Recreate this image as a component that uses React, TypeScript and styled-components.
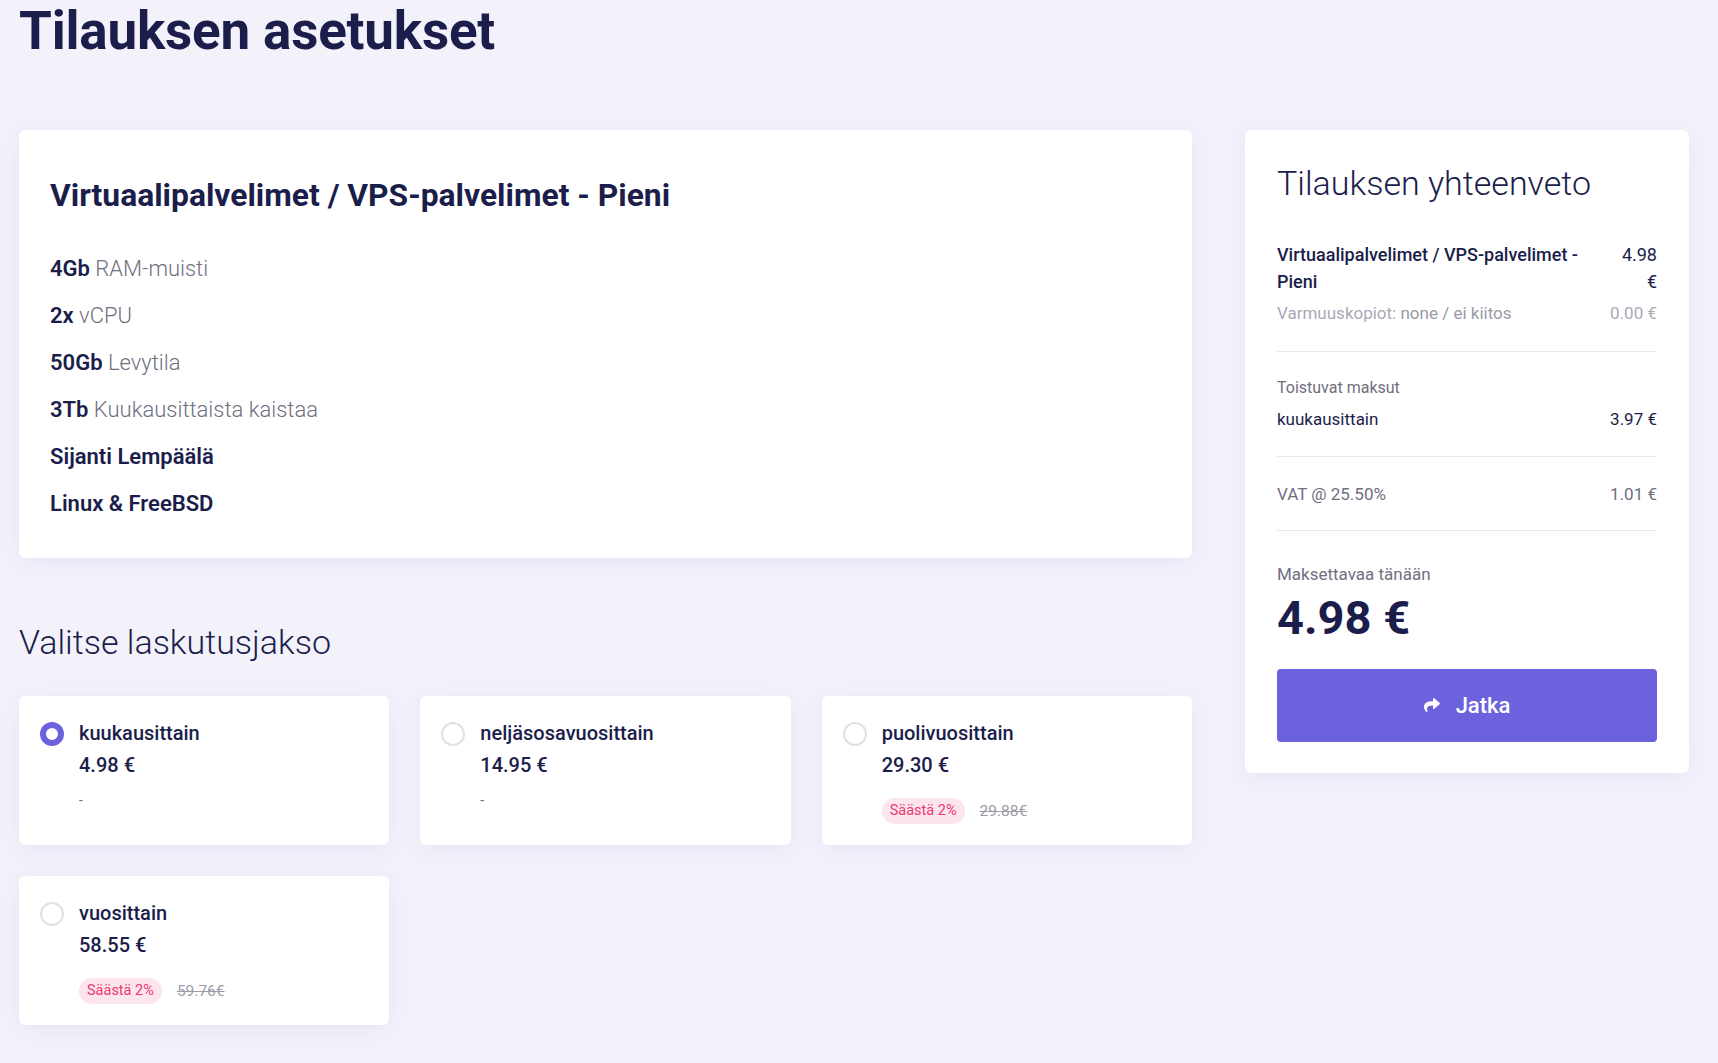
import React, { useState } from "react"
import styled, { createGlobalStyle } from "styled-components"
import { FaShare } from "react-icons/fa"

const Colors = {
  bg: "#f3f2fb",
  navy: "#1b1e4b",
  gray: "#6f6f80",
  light: "#a9a9b6",
  line: "#e9e8ef",
  purple: "#6c62de",
  pink: "#ec3a72",
  pinkBg: "#fde5ed",
}

const GlobalStyle = createGlobalStyle`
  body {
    margin: 0;
    background: ${Colors.bg};
    font-family: Roboto, "Liberation Sans", sans-serif;
    color: ${Colors.navy};
  }
  * { box-sizing: border-box; }
`

type Cycle = {
  id: string
  name: string
  price: string
  saving?: string
  original?: string
}

const cycles: Cycle[] = [
  { id: "m", name: "kuukausittain", price: "4.98 €" },
  { id: "q", name: "neljäsosavuosittain", price: "14.95 €" },
  { id: "h", name: "puolivuosittain", price: "29.30 €", saving: "Säästä 2%", original: "29.88€" },
  { id: "y", name: "vuosittain", price: "58.55 €", saving: "Säästä 2%", original: "59.76€" },
]

const specs = [
  { strong: "4Gb", rest: "RAM-muisti" },
  { strong: "2x", rest: "vCPU" },
  { strong: "50Gb", rest: "Levytila" },
  { strong: "3Tb", rest: "Kuukausittaista kaistaa" },
  { strong: "Sijanti Lempäälä", rest: "" },
  { strong: "Linux & FreeBSD", rest: "" },
]

export default function App() {
  const [selected, setSelected] = useState("m")

  return (
    <S.Page>
      <GlobalStyle />
      <S.PageTitle>Tilauksen asetukset</S.PageTitle>
      <S.Layout>
        <S.Main>
          <S.ProductCard>
            <S.ProductTitle>Virtuaalipalvelimet / VPS-palvelimet - Pieni</S.ProductTitle>
            <S.SpecList>
              {specs.map((s) => (
                <S.Spec key={s.strong}>
                  <strong>{s.strong}</strong>
                  {s.rest && <span> {s.rest}</span>}
                </S.Spec>
              ))}
            </S.SpecList>
          </S.ProductCard>

          <S.SectionTitle>Valitse laskutusjakso</S.SectionTitle>
          <S.CycleGrid>
            {cycles.map((c) => (
              <S.CycleCard key={c.id} onClick={() => setSelected(c.id)}>
                <S.Radio checked={selected === c.id} />
                <S.CycleBody>
                  <S.CycleName>{c.name}</S.CycleName>
                  <S.CyclePrice>{c.price}</S.CyclePrice>
                  {c.saving ? (
                    <S.SavingRow>
                      <S.Badge>{c.saving}</S.Badge>
                      <S.OldPrice>{c.original}</S.OldPrice>
                    </S.SavingRow>
                  ) : (
                    <S.NoSaving>-</S.NoSaving>
                  )}
                </S.CycleBody>
              </S.CycleCard>
            ))}
          </S.CycleGrid>
        </S.Main>

        <S.Summary>
          <S.SummaryTitle>Tilauksen yhteenveto</S.SummaryTitle>
          <S.ItemRow>
            <S.ItemName>Virtuaalipalvelimet / VPS-palvelimet - Pieni</S.ItemName>
            <S.ItemPrice>4.98 €</S.ItemPrice>
          </S.ItemRow>
          <S.AddonRow>
            <span>
              Varmuuskopiot: <S.AddonValue>none / ei kiitos</S.AddonValue>
            </span>
            <span>0.00 €</span>
          </S.AddonRow>
          <S.Divider />
          <S.SmallLabel>Toistuvat maksut</S.SmallLabel>
          <S.Row>
            <span>kuukausittain</span>
            <span>3.97 €</span>
          </S.Row>
          <S.Divider />
          <S.Row muted>
            <span>VAT @ 25.50%</span>
            <span>1.01 €</span>
          </S.Row>
          <S.Divider />
          <S.TotalLabel>Maksettavaa tänään</S.TotalLabel>
          <S.Total>4.98 €</S.Total>
          <S.Button>
            <FaShare size={16} />
            <span>Jatka</span>
          </S.Button>
        </S.Summary>
      </S.Layout>
    </S.Page>
  )
}

const S = {
  Page: styled.div`
    padding: 0 29px 40px 19px;
  `,
  PageTitle: styled.h1`
    margin: 0;
    font-size: 53px;
    line-height: 1.2;
    font-weight: 700;
    color: ${Colors.navy};
    letter-spacing: -0.2px;
  `,
  Layout: styled.div`
    margin-top: 66px;
    display: grid;
    grid-template-columns: 1173px 444px;
    column-gap: 53px;
    align-items: start;
  `,
  Main: styled.div`
    display: flex;
    flex-direction: column;
  `,
  ProductCard: styled.div`
    background: #fff;
    border-radius: 6px;
    padding: 46px 31px 39px;
    box-shadow: 0 4px 24px rgba(70, 60, 150, 0.08);
  `,
  ProductTitle: styled.h2`
    margin: 0 0 40px;
    font-size: 31.8px;
    line-height: 1.2;
    font-weight: 700;
    color: ${Colors.navy};
  `,
  SpecList: styled.ul`
    list-style: none;
    margin: 0;
    padding: 0;
    display: flex;
    flex-direction: column;
    gap: 17px;
  `,
  Spec: styled.li`
    font-size: 22px;
    line-height: 30px;
    color: ${Colors.navy};

    strong {
      font-weight: 600;
    }
    span {
      font-weight: 300;
      color: ${Colors.gray};
    }
  `,
  SectionTitle: styled.h3`
    margin: 64px 0 33px;
    font-size: 34px;
    line-height: 1.2;
    font-weight: 300;
    color: ${Colors.navy};
  `,
  CycleGrid: styled.div`
    display: grid;
    grid-template-columns: repeat(3, 1fr);
    gap: 31px;
  `,
  CycleCard: styled.div`
    background: #fff;
    border-radius: 6px;
    padding: 21px 21px 21px;
    display: flex;
    gap: 15px;
    cursor: pointer;
    box-shadow: 0 4px 24px rgba(70, 60, 150, 0.08);
  `,
  Radio: styled.span<{ checked: boolean }>`
    flex: none;
    width: 24px;
    height: 24px;
    margin-top: 5px;
    border-radius: 50%;
    border: ${({ checked }) => (checked ? `6px solid ${Colors.purple}` : "2px solid #e0e0e6")};
    background: #fff;
  `,
  CycleBody: styled.div`
    display: flex;
    flex-direction: column;
  `,
  CycleName: styled.div`
    font-size: 20px;
    line-height: 32px;
    font-weight: 500;
  `,
  CyclePrice: styled.div`
    font-size: 20px;
    line-height: 32px;
    font-weight: 500;
  `,
  SavingRow: styled.div`
    margin-top: 17px;
    display: flex;
    align-items: center;
    gap: 15px;
  `,
  Badge: styled.span`
    height: 26px;
    padding: 0 8px;
    border-radius: 13px;
    background: ${Colors.pinkBg};
    color: ${Colors.pink};
    font-size: 14.5px;
    line-height: 26px;
  `,
  OldPrice: styled.span`
    font-size: 15.5px;
    color: #9c9ca8;
    text-decoration: line-through;
  `,
  NoSaving: styled.div`
    margin-top: 12px;
    font-size: 14px;
    line-height: 14px;
    color: ${Colors.gray};
  `,
  Summary: styled.aside`
    background: #fff;
    border-radius: 6px;
    padding: 33px 32px 31px;
    box-shadow: 0 4px 24px rgba(70, 60, 150, 0.08);
    display: flex;
    flex-direction: column;
  `,
  SummaryTitle: styled.h3`
    margin: 0 0 38px;
    font-size: 34px;
    line-height: 1.2;
    font-weight: 300;
    color: ${Colors.navy};
  `,
  ItemRow: styled.div`
    display: flex;
    justify-content: space-between;
    gap: 20px;
    font-size: 18px;
    line-height: 27px;
  `,
  ItemName: styled.div`
    flex: 1;
    font-weight: 500;
  `,
  ItemPrice: styled.div`
    width: 38px;
    text-align: right;
  `,
  AddonRow: styled.div`
    margin-top: 5px;
    display: flex;
    justify-content: space-between;
    font-size: 17px;
    line-height: 27px;
    color: ${Colors.light};
  `,
  AddonValue: styled.span`
    color: #9a9aa6;
  `,
  Divider: styled.hr`
    margin: 24px 0 25px;
    border: 0;
    border-top: 1px solid ${Colors.line};
    width: 100%;
  `,
  SmallLabel: styled.div`
    font-size: 16px;
    line-height: 22px;
    color: ${Colors.gray};
  `,
  Row: styled.div<{ muted?: boolean }>`
    margin-top: ${({ muted }) => (muted ? "0" : "7px")};
    display: flex;
    justify-content: space-between;
    font-size: 17px;
    line-height: ${({ muted }) => (muted ? "24px" : "26px")};
    color: ${({ muted }) => (muted ? Colors.gray : Colors.navy)};
  `,
  TotalLabel: styled.div`
    margin-top: 6px;
    font-size: 17px;
    line-height: 24px;
    color: ${Colors.gray};
  `,
  Total: styled.div`
    margin-top: 4px;
    font-size: 47px;
    line-height: 1.2;
    font-weight: 700;
    color: ${Colors.navy};
  `,
  Button: styled.button`
    margin-top: 22px;
    height: 73px;
    border: 0;
    border-radius: 4px;
    background: ${Colors.purple};
    color: #fff;
    font-family: Roboto, "Liberation Sans", sans-serif;
    font-size: 22px;
    font-weight: 500;
    display: flex;
    align-items: center;
    justify-content: center;
    gap: 16px;
    cursor: pointer;
  `,
}
